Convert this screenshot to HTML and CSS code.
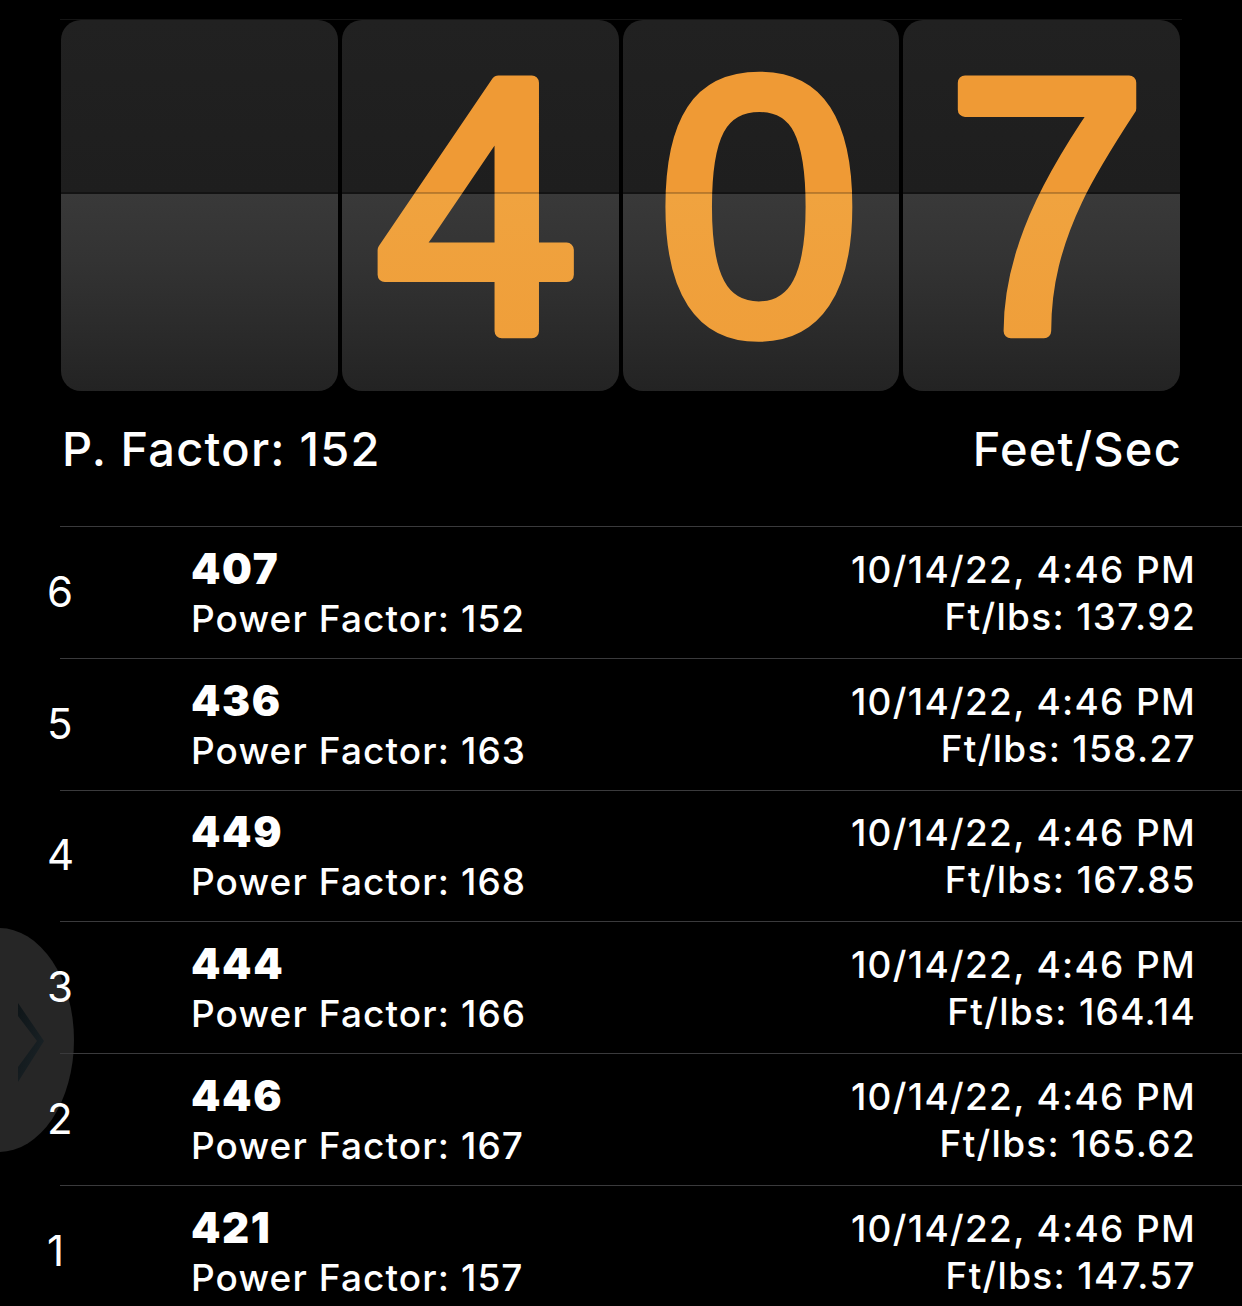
FILE: index.html
```html
<!DOCTYPE html>
<html lang="en">
<head>
<meta charset="utf-8">
<title>Feet/Sec</title>
<link rel="stylesheet" href="styles.css">
</head>
<body>
<div class="screen">
  <div class="board">
    <div class="card"></div>
    <div class="card">
      <svg class="digit" viewBox="0 0 277 371" preserveAspectRatio="none">
        <defs>
          <linearGradient id="g2" gradientUnits="userSpaceOnUse" x1="0" y1="0" x2="0" y2="371">
            <stop offset="0" stop-color="#EF9A35"/>
            <stop offset="0.466" stop-color="#EF9A35"/>
            <stop offset="0.466" stop-color="#F0A33F"/>
            <stop offset="1" stop-color="#EF9D38"/>
          </linearGradient>
        </defs>
        <text x="135" y="311" fill="url(#g2)" stroke="url(#g2)">4</text>
      </svg>
    </div>
    <div class="card">
      <svg class="digit" viewBox="0 0 277 371" preserveAspectRatio="none">
        <defs>
          <linearGradient id="g3" gradientUnits="userSpaceOnUse" x1="0" y1="0" x2="0" y2="371">
            <stop offset="0" stop-color="#EF9A35"/>
            <stop offset="0.466" stop-color="#EF9A35"/>
            <stop offset="0.466" stop-color="#F0A33F"/>
            <stop offset="1" stop-color="#EF9D38"/>
          </linearGradient>
        </defs>
        <text x="136" y="311" fill="url(#g3)" stroke="url(#g3)">0</text>
      </svg>
    </div>
    <div class="card">
      <svg class="digit" viewBox="0 0 277 371" preserveAspectRatio="none">
        <defs>
          <linearGradient id="g4" gradientUnits="userSpaceOnUse" x1="0" y1="0" x2="0" y2="371">
            <stop offset="0" stop-color="#EF9A35"/>
            <stop offset="0.466" stop-color="#EF9A35"/>
            <stop offset="0.466" stop-color="#F0A33F"/>
            <stop offset="1" stop-color="#EF9D38"/>
          </linearGradient>
        </defs>
        <text x="144" y="311" fill="url(#g4)" stroke="url(#g4)">7</text>
      </svg>
    </div>
  </div>

  <div class="summary">
    <span class="summary-left">P. Factor: 152</span>
    <span class="summary-right">Feet/Sec</span>
  </div>

  <div class="side-tab">
    <svg class="chevron" viewBox="0 0 30 80" width="30" height="80">
      <defs>
        <linearGradient id="cg" x1="0" y1="0" x2="1" y2="1">
          <stop offset="0" stop-color="#0e1518"/>
          <stop offset="1" stop-color="#1c2428"/>
        </linearGradient>
      </defs>
      <polygon points="0,0 26,38 0,79 0,64 19,38 0,13" fill="url(#cg)"/>
    </svg>
  </div>

  <ul class="shots">
    <li class="shot">
      <span class="shot-no">6</span>
      <div class="shot-main"><span class="speed">407</span><span class="pf">Power Factor: 152</span></div>
      <div class="shot-meta"><span class="date">10/14/22, 4:46 PM</span><span class="energy">Ft/lbs: 137.92</span></div>
    </li>
    <li class="shot">
      <span class="shot-no">5</span>
      <div class="shot-main"><span class="speed">436</span><span class="pf">Power Factor: 163</span></div>
      <div class="shot-meta"><span class="date">10/14/22, 4:46 PM</span><span class="energy">Ft/lbs: 158.27</span></div>
    </li>
    <li class="shot">
      <span class="shot-no">4</span>
      <div class="shot-main"><span class="speed">449</span><span class="pf">Power Factor: 168</span></div>
      <div class="shot-meta"><span class="date">10/14/22, 4:46 PM</span><span class="energy">Ft/lbs: 167.85</span></div>
    </li>
    <li class="shot">
      <span class="shot-no">3</span>
      <div class="shot-main"><span class="speed">444</span><span class="pf">Power Factor: 166</span></div>
      <div class="shot-meta"><span class="date">10/14/22, 4:46 PM</span><span class="energy">Ft/lbs: 164.14</span></div>
    </li>
    <li class="shot">
      <span class="shot-no">2</span>
      <div class="shot-main"><span class="speed">446</span><span class="pf">Power Factor: 167</span></div>
      <div class="shot-meta"><span class="date">10/14/22, 4:46 PM</span><span class="energy">Ft/lbs: 165.62</span></div>
    </li>
    <li class="shot">
      <span class="shot-no">1</span>
      <div class="shot-main"><span class="speed">421</span><span class="pf">Power Factor: 157</span></div>
      <div class="shot-meta"><span class="date">10/14/22, 4:46 PM</span><span class="energy">Ft/lbs: 147.57</span></div>
    </li>
  </ul>
</div>
</body>
</html>
```

FILE: styles.css
```css
html, body {
  margin: 0;
  padding: 0;
  background: #000;
}

body {
  width: 1242px;
  height: 1306px;
  overflow: hidden;
  font-family: Inter, "Noto Sans", "Liberation Sans", sans-serif;
  color: #fff;
}

.screen {
  position: relative;
  width: 1242px;
  height: 1306px;
  padding-top: 19px;
  box-sizing: border-box;
}

.board {
  display: flex;
  gap: 4px;
  margin-left: 60px;
  width: 1122px;
  padding: 0 2px 0 1px;
  box-sizing: border-box;
  border-top: 1px solid #151515;
}

.card {
  flex: 1;
  height: 371px;
  border-radius: 20px;
  position: relative;
  background: linear-gradient(to bottom,
    #212121 0,
    #1e1e1e 172px,
    #191919 172px,
    #191919 174px,
    #393939 174px,
    #333333 240px,
    #2c2c2c 300px,
    #232323 371px);
}

.card::after {
  content: "";
  position: absolute;
  left: 0;
  right: 0;
  top: 172px;
  height: 2px;
  background: rgba(0, 0, 0, 0.22);
}

.digit {
  display: block;
  width: 100%;
  height: 100%;
  overflow: visible;
}

.digit text {
  font-family: "Liberation Sans", Arial, sans-serif;
  font-size: 361px;
  font-weight: 400;
  text-anchor: middle;
  stroke-width: 14.5px;
  stroke-linejoin: round;
  stroke-linecap: round;
}

.summary {
  display: flex;
  justify-content: space-between;
  align-items: baseline;
  margin: 28px 61px 0 62px;
  height: 60px;
  font-size: 47px;
  line-height: 60px;
  font-weight: 500;
  letter-spacing: 1.2px;
}

.summary-right {
  margin-right: -1px;
}

.side-tab {
  position: absolute;
  left: -76px;
  top: 928px;
  width: 150px;
  height: 224px;
  border-radius: 50%;
  background: #262626;
  z-index: 0;
}

.chevron {
  position: absolute;
  left: 94px;
  top: 75px;
}

.shots {
  position: relative;
  z-index: 1;
  list-style: none;
  margin: 47px 0 0 0;
  padding: 0;
}

.shot {
  display: flex;
  align-items: center;
  height: 131.8px;
  padding: 0 47px;
  background: linear-gradient(#3a3a3c, #3a3a3c) no-repeat 60px 0 / calc(100% - 60px) 1px;
}

.shot-no {
  width: 144px;
  font-size: 42px;
  line-height: 50px;
  font-weight: 400;
}

.shot-main {
  display: flex;
  flex-direction: column;
  flex: 1;
}

.speed {
  font-size: 42px;
  line-height: 54px;
  font-weight: 900;
  letter-spacing: 1.6px;
}

.pf {
  font-size: 37px;
  line-height: 46px;
  font-weight: 500;
  letter-spacing: 1.1px;
}

.shot-meta {
  display: flex;
  flex-direction: column;
  align-items: flex-end;
  font-size: 37px;
  font-weight: 500;
  letter-spacing: 1.3px;
  margin-right: -1px;
}

.date {
  line-height: 49px;
}

.energy {
  line-height: 45px;
}
```
